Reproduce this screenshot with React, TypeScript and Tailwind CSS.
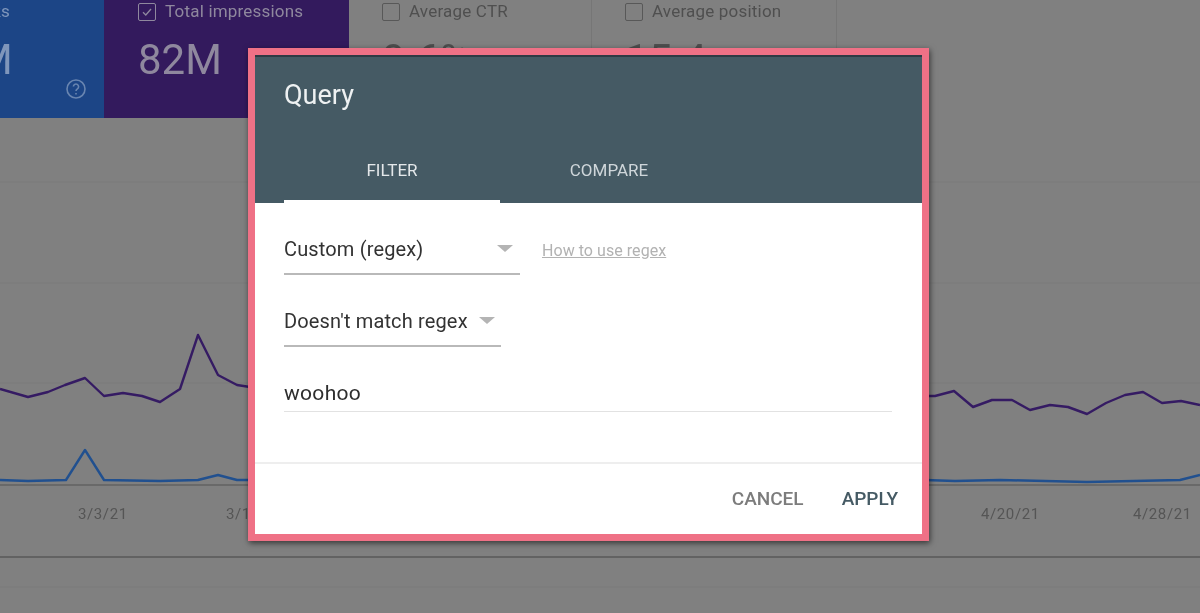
const purpleLeft = "0,389 28,397 48,392 65,385 85,378 104,396 123,393 142,396 160,402 180,389 198,335 218,375 237,385 250,387";
const purpleRight = "925,396 935,396 954,391 973,407 992,400 1012,400 1030,410 1050,405 1068,407 1087,414 1106,403 1125,395 1143,392 1162,403 1181,401 1200,405";
const blueLeft = "0,480 28,481 66,480 85,450 104,480 160,481 198,480 218,475 237,480 250,480";
const blueRight = "925,480 955,481 1000,480 1087,482 1180,480 1200,475";

function Check({ checked, className }: { checked?: boolean; className: string }) {
    return (
        <div className={`w-[18px] h-[18px] border-[1.5px] rounded-[2px] flex items-center justify-center flex-shrink-0 ${className}`}>
            {checked && (
                <svg width="12" height="12" viewBox="0 0 12 12" fill="none" stroke="currentColor" strokeWidth="1.3">
                    <path d="M2 6.2 L4.8 9 L10 3" />
                </svg>
            )}
        </div>
    );
}

function MetricCard({ label, value, checked, className, textClass, boxClass, valueClass }: { label: string; value: string; checked?: boolean; className: string; textClass: string; boxClass: string; valueClass?: string }) {
    return (
        <div className={`relative flex-shrink-0 h-[118px] ${className}`}>
            <div className={`flex items-center gap-[9px] pt-[3px] h-[21px] text-[17px] tracking-[0.2px] whitespace-nowrap ${textClass}`}>
                <Check checked={checked} className={boxClass} />
                {label}
            </div>
            <div className={`mt-[15px] text-[42px] leading-[48px] whitespace-nowrap ${textClass} ${valueClass ?? ""}`}>{value}</div>
        </div>
    );
}

function Chart() {
    return (
        <svg width="1200" height="495" viewBox="0 118 1200 495" className="block" fontFamily="Roboto, sans-serif">
            <g stroke="#7b7b7b" strokeWidth="1">
                <line x1="0" y1="182" x2="1200" y2="182" />
                <line x1="0" y1="283" x2="1200" y2="283" />
                <line x1="0" y1="383" x2="1200" y2="383" />
                <line x1="0" y1="587" x2="1200" y2="587" />
            </g>
            <line x1="0" y1="485" x2="1200" y2="485" stroke="#626262" strokeWidth="1.5" />
            <line x1="0" y1="557" x2="1200" y2="557" stroke="#626262" strokeWidth="2" />
            <g fill="none" strokeWidth="2.4" strokeLinejoin="round">
                <polyline points={purpleLeft} stroke="#351b63" />
                <polyline points={purpleRight} stroke="#351b63" />
                <polyline points={blueLeft} stroke="#21508f" />
                <polyline points={blueRight} stroke="#21508f" />
            </g>
            <g fill="#555555" fontSize="15" letterSpacing="0.6">
                <text x="78" y="519">3/3/21</text>
                <text x="226" y="519">3/11/21</text>
                <text x="981" y="519">4/20/21</text>
                <text x="1133" y="519">4/28/21</text>
            </g>
        </svg>
    );
}

function Select({ label, width, gap }: { label: string; width: string; gap: string }) {
    return (
        <div className={`flex items-start h-[45px] border-b-2 border-[#b9b9b9] ${width}`}>
            <div className="text-[20px] tracking-[0.15px] leading-[24px] mt-[7px] text-[#333333] whitespace-nowrap">{label}</div>
            <div className={`mt-[15px] w-0 h-0 border-l-[8px] border-r-[8px] border-t-[7px] border-l-transparent border-r-transparent border-t-[#b4b4b4] ${gap}`}></div>
        </div>
    );
}

function QueryDialog() {
    return (
        <div className="absolute left-[248px] top-[48px] w-[681px] h-[493px] border-[7px] border-[#ef7186] bg-white shadow-[1px_2px_6px_rgba(0,0,0,0.6)] flex flex-col">
            <div className="h-[148px] bg-[#455a64] border-t-2 border-[#2f3a44] flex flex-col justify-between">
                <div className="pl-[29px] pt-[22px] text-[27px] leading-[32px] text-[#eef1f2]">Query</div>
                <div className="flex pl-[29px] text-[17px] text-[#e4e8ea]">
                    <div className="w-[216px] h-[47px] pt-[2px] text-center border-b-[3px] border-white">FILTER</div>
                    <div className="w-[218px] h-[47px] pt-[2px] text-center text-[#cfd6da]">COMPARE</div>
                </div>
            </div>
            <div className="px-[29px] pt-[27px] flex-1">
                <div className="flex items-center">
                    <Select label="Custom (regex)" width="w-[236px]" gap="ml-[74px]" />
                    <a className="ml-[22px] mb-[3px] text-[16px] tracking-[0.05px] text-[#b2b2b2] underline">How to use regex</a>
                </div>
                <div className="mt-[27px]">
                    <Select label="Doesn't match regex" width="w-[217px]" gap="ml-[11px]" />
                </div>
                <div className="mt-[28px] h-[37px] pt-[6px] w-[608px] border-b border-[#e2e2e2] text-[21px] tracking-[0.3px] leading-[24px] text-[#2e2e2e]">woohoo</div>
            </div>
            <div className="h-[72px] border-t-2 border-[#eeeeee] flex items-center justify-end gap-[38px] pr-[24px] text-[19px] font-medium">
                <div className="text-[#7c7c7c]">CANCEL</div>
                <div className="text-[#455a64]">APPLY</div>
            </div>
        </div>
    );
}

export default function App() {
    return (
        <div className="relative w-[1200px] h-[613px] overflow-hidden bg-[#808080] font-['Roboto',sans-serif] blur-[0.5px]">
            <div className="flex h-[118px]">
                <div className="w-[104px] flex-shrink-0 relative overflow-hidden bg-[#1c4586]">
                    <MetricCard label="Total clicks" value="2.21M" checked className="-ml-[105px] w-[209px]" valueClass="-ml-[1px]" textClass="text-[#7f96bb]" boxClass="border-[#7f96bb] text-[#7f96bb]" />
                    <svg width="24" height="24" viewBox="0 0 24 24" fill="none" stroke="#6985b0" strokeWidth="1.6" className="absolute left-[64px] top-[77px]">
                        <circle cx="12" cy="12" r="9" />
                        <path d="M9.4 9.6a2.6 2.6 0 1 1 4 2.2c-.9.6-1.4 1.1-1.4 2.2" />
                        <path d="M12 16v1.6" />
                    </svg>
                </div>
                <MetricCard label="Total impressions" value="82M" checked className="w-[245px] pl-[34px] bg-[#331a5d]" textClass="text-[#8f889e]" boxClass="border-[#8f889e] text-[#8f889e]" />
                <MetricCard label="Average CTR" value="9.6%" className="w-[243px] pl-[33px] border-r border-[#767676]" textClass="text-[#4f4f4f]" boxClass="border-[#585858]" />
                <MetricCard label="Average position" value="15.4" className="w-[245px] pl-[33px] border-r border-[#767676]" textClass="text-[#4f4f4f]" boxClass="border-[#585858]" />
            </div>
            <Chart />
            <QueryDialog />
        </div>
    );
}
